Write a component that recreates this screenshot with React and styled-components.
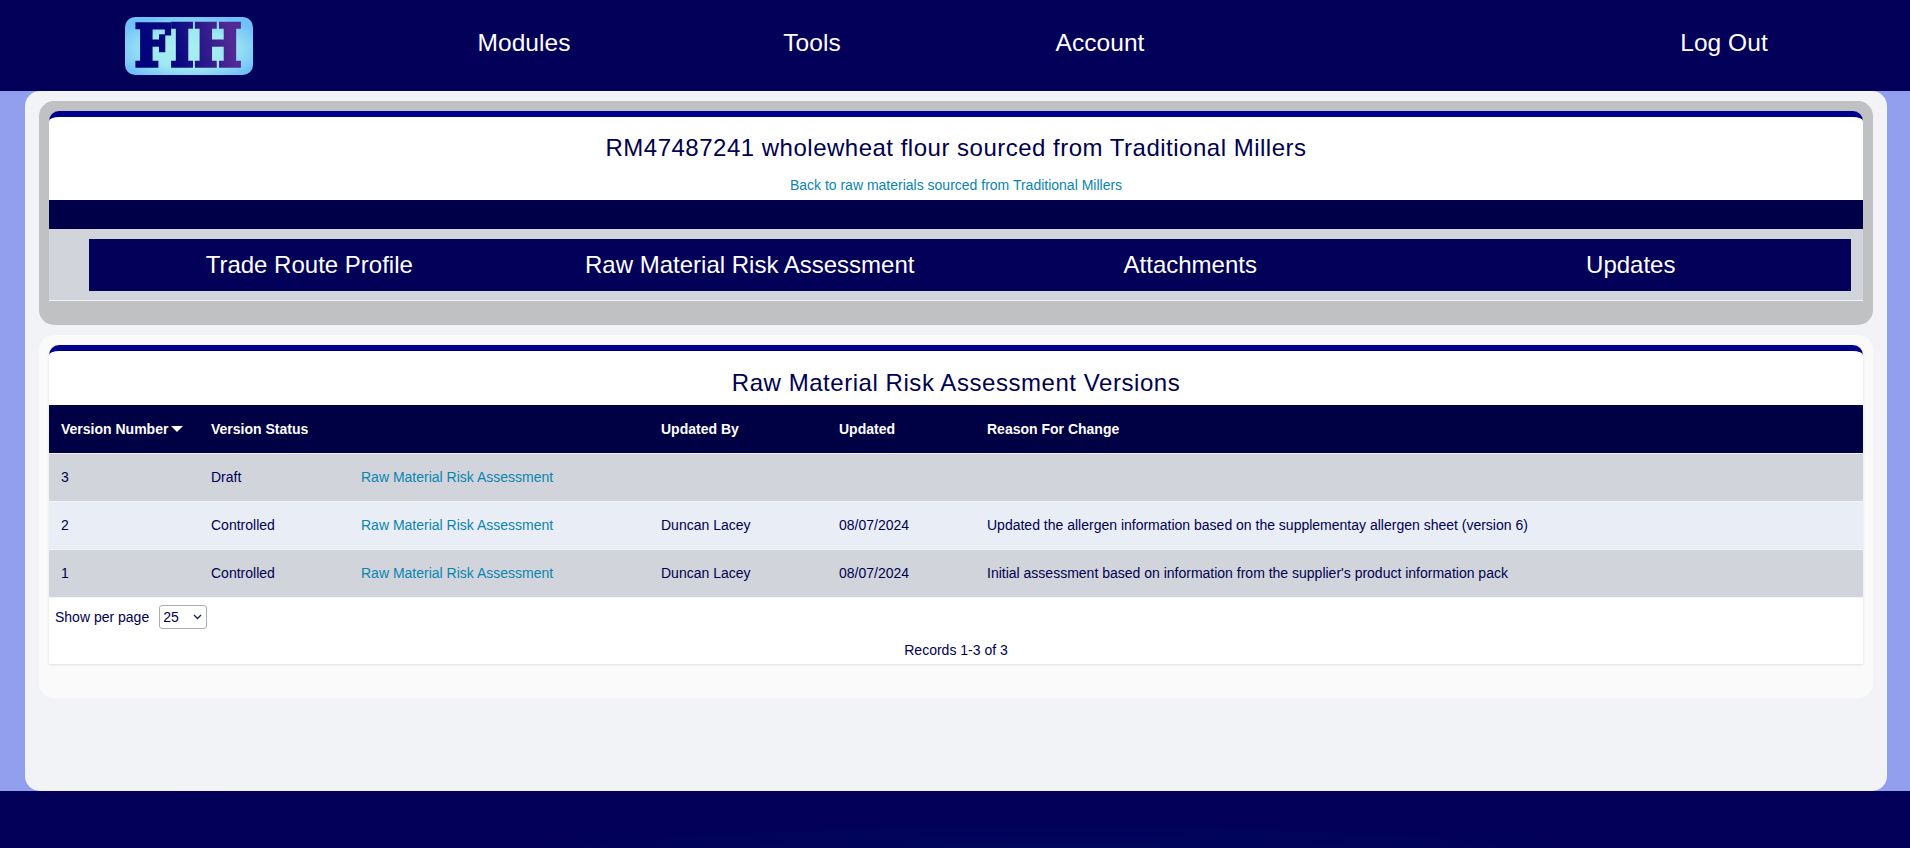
import React from "react";
import styled, { createGlobalStyle } from "styled-components";

const Global = createGlobalStyle`
  html, body { margin: 0; padding: 0; height: 100%; }
  body { font-family: "Liberation Sans", Arial, sans-serif; color: #000050; background: #929fef; }
`;

const Page = styled.div`
  width: 1910px;
  height: 848px;
  display: flex;
  flex-direction: column;
  background: #929fef;
  overflow: hidden;
`;

const Header = styled.header`
  height: 91px;
  flex: none;
  background: #03005a;
  display: grid;
  grid-template-columns: 380px 288px 288px 288px 1fr 372px;
  align-items: center;
`;

const LogoCell = styled.div`
  display: flex;
  justify-content: center;
  padding-right: 2px;
  padding-top: 1px;
`;

const NavItem = styled.a`
  color: #fff;
  font-size: 24.5px;
  letter-spacing: 0.05px;
  text-align: center;
  padding-bottom: 5px;
`;

const Main = styled.main`
  flex: 1;
  margin: 0 23px 0 25px;
  padding: 10px 14px;
  background: #f1f3f7;
  border-radius: 15px;
`;

const Card = styled.section`
  background: ${(p) => p.$bg};
  border-radius: 15px;
  padding: 10px 10px ${(p) => p.$pb}px;
  margin-bottom: 10px;
`;

const Panel = styled.div`
  background: #fff;
  border-top: 6px solid #00008b;
  border-radius: 10px 10px 0 0;
`;

const Title = styled.h1`
  margin: 0;
  font-weight: 400;
  font-size: 24px;
  line-height: 28px;
  letter-spacing: 0.5px;
  color: #000050;
  text-align: center;
  padding-top: 17px;
`;

const BackLink = styled.a`
  display: block;
  margin-top: 16px;
  height: 22px;
  font-size: 14px;
  line-height: 15px;
  text-align: center;
  color: #0a84b0;
`;

const DarkBar = styled.div`
  height: 29px;
  background: #000048;
`;

const TabStrip = styled.div`
  background: #d1d5db;
  padding: 10px 12px 9px 40px;
  border-bottom: 1px solid #f1f3f7;
`;

const TabBar = styled.nav`
  height: 52px;
  background: #03005a;
  display: grid;
  grid-template-columns: repeat(4, 1fr);
  align-items: center;
`;

const Tab = styled.a`
  color: #fff;
  font-size: 24px;
  text-align: center;
`;

const Heading = styled.h2`
  margin: 0;
  height: 54px;
  font-weight: 400;
  font-size: 24px;
  line-height: 28px;
  letter-spacing: 0.55px;
  color: #000050;
  text-align: center;
  padding-top: 18px;
  box-sizing: border-box;
`;

const Table = styled.table`
  width: 100%;
  border-collapse: collapse;
  table-layout: fixed;
  font-size: 14px;
`;

const Col = styled.col`
  width: ${(p) => p.$w}px;
`;

const Th = styled.th`
  background: #000045;
  color: #fff;
  height: 48px;
  padding: 0 0 0 12px;
  text-align: left;
  font-weight: 700;
  border-bottom: 1px solid #f1f3f7;
  white-space: nowrap;
`;

const SortArrow = styled.span`
  display: inline-block;
  margin-left: 3px;
  vertical-align: 2px;
  width: 0;
  height: 0;
  border-left: 6px solid transparent;
  border-right: 6px solid transparent;
  border-top: 6px solid #fff;
`;

const Tr = styled.tr`
  background: ${(p) => (p.$alt ? "#e9eef6" : "#d1d5db")};
`;

const Td = styled.td`
  height: 45px;
  padding: 0 0 2px 12px;
  color: #000050;
  border-bottom: 1px solid #f1f3f7;
  white-space: nowrap;
`;

const RowLink = styled.a`
  color: #0a84b0;
`;

const PagerRow = styled.div`
  display: flex;
  align-items: center;
  gap: 10px;
  padding: 7px 0 0 6px;
  font-size: 14px;
  height: 24px;
`;

const SelectWrap = styled.span`
  position: relative;
  display: inline-flex;
`;

const PageSelect = styled.select`
  appearance: none;
  width: 48px;
  height: 24px;
  box-sizing: border-box;
  font-family: inherit;
  font-size: 14px;
  color: #000050;
  background: #fff;
  border: 1px solid #a6adb5;
  border-radius: 3px;
  padding: 0 0 0 3px;
`;

const Chevron = styled.svg`
  position: absolute;
  right: 5px;
  top: 9px;
  pointer-events: none;
`;

const Records = styled.div`
  height: 35px;
  line-height: 15px;
  padding-top: 14px;
  box-sizing: border-box;
  text-align: center;
  font-size: 14px;
  color: #000050;
`;

const TablePanel = styled(Panel)`
  box-shadow: 0 1px 3px rgba(0, 0, 0, 0.1);
`;

const Footer = styled.footer`
  height: 57px;
  flex: none;
  background: radial-gradient(ellipse at 55% 120%, #000a5c 0%, #020059 40%, #020057 100%);
`;

function Logo() {
  return (
    <svg width="128" height="58" viewBox="0 0 128 58" overflow="visible" aria-label="FIH logo">
      <defs>
        <radialGradient id="logoBg" cx="50%" cy="55%" r="60%">
          <stop offset="0%" stopColor="#a8f0ee" />
          <stop offset="55%" stopColor="#a0e8f2" />
          <stop offset="100%" stopColor="#70c0fa" />
        </radialGradient>
        <linearGradient id="logoInk" gradientUnits="userSpaceOnUse" x1="10" y1="40" x2="120" y2="15">
          <stop offset="0%" stopColor="#000078" />
          <stop offset="45%" stopColor="#0a0a80" />
          <stop offset="100%" stopColor="#522a96" />
        </linearGradient>
      </defs>
      <rect width="128" height="58" rx="10" fill="url(#logoBg)" />
      <text
        transform="translate(9.5 49) scale(0.87 1)"
        fontFamily="'DejaVu Serif', serif"
        fontWeight="700"
        fontSize="58"
        fill="url(#logoInk)"
        stroke="url(#logoInk)"
        strokeWidth="3.4"
        strokeLinejoin="miter"
      >
        FIH
      </text>
    </svg>
  );
}

const columns = [150, 150, 300, 178, 148, 888];

const rows = [
  { v: "3", s: "Draft", by: "", at: "", why: "" },
  {
    v: "2",
    s: "Controlled",
    by: "Duncan Lacey",
    at: "08/07/2024",
    why: "Updated the allergen information based on the supplementay allergen sheet (version 6)",
    alt: true,
  },
  {
    v: "1",
    s: "Controlled",
    by: "Duncan Lacey",
    at: "08/07/2024",
    why: "Initial assessment based on information from the supplier's product information pack",
  },
];

export default function App() {
  return (
    <Page>
      <Global />
      <Header>
        <LogoCell>
          <Logo />
        </LogoCell>
        <NavItem>Modules</NavItem>
        <NavItem>Tools</NavItem>
        <NavItem>Account</NavItem>
        <span />
        <NavItem>Log Out</NavItem>
      </Header>
      <Main>
        <Card $bg="#c0c1c3" $pb={24}>
          <Panel>
            <Title>RM47487241 wholewheat flour sourced from Traditional Millers</Title>
            <BackLink>Back to raw materials sourced from Traditional Millers</BackLink>
            <DarkBar />
            <TabStrip>
              <TabBar>
                <Tab>Trade Route Profile</Tab>
                <Tab>Raw Material Risk Assessment</Tab>
                <Tab>Attachments</Tab>
                <Tab>Updates</Tab>
              </TabBar>
            </TabStrip>
          </Panel>
        </Card>
        <Card $bg="#fafafa" $pb={34}>
          <TablePanel>
            <Heading>Raw Material Risk Assessment Versions</Heading>
            <Table>
              <colgroup>
                {columns.map((w, i) => (
                  <Col key={i} $w={w} />
                ))}
              </colgroup>
              <thead>
                <tr>
                  <Th>
                    Version Number
                    <SortArrow />
                  </Th>
                  <Th>Version Status</Th>
                  <Th />
                  <Th>Updated By</Th>
                  <Th>Updated</Th>
                  <Th>Reason For Change</Th>
                </tr>
              </thead>
              <tbody>
                {rows.map((r) => (
                  <Tr key={r.v} $alt={r.alt}>
                    <Td>{r.v}</Td>
                    <Td>{r.s}</Td>
                    <Td>
                      <RowLink>Raw Material Risk Assessment</RowLink>
                    </Td>
                    <Td>{r.by}</Td>
                    <Td>{r.at}</Td>
                    <Td>{r.why}</Td>
                  </Tr>
                ))}
              </tbody>
            </Table>
            <PagerRow>
              Show per page
              <SelectWrap>
                <PageSelect defaultValue="25">
                  <option>10</option>
                  <option>25</option>
                  <option>50</option>
                </PageSelect>
                <Chevron width="9" height="6" viewBox="0 0 9 6" aria-hidden="true">
                  <path d="M1 1l3.5 3.5L8 1" fill="none" stroke="#1a1a50" strokeWidth="1.3" />
                </Chevron>
              </SelectWrap>
            </PagerRow>
            <Records>Records 1-3 of 3</Records>
          </TablePanel>
        </Card>
      </Main>
      <Footer />
    </Page>
  );
}
